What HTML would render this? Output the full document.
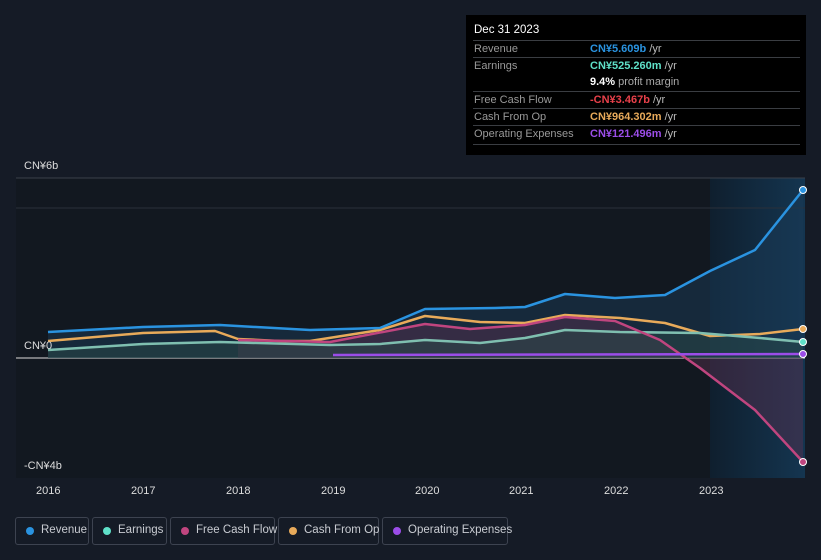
<!DOCTYPE html>
<html><head><meta charset="utf-8"><style>
body{margin:0;width:821px;height:560px;background:#151b26;font-family:"Liberation Sans",sans-serif;overflow:hidden;position:relative}
.tip{position:absolute;left:466px;top:15px;width:340px;height:140px;background:#000;color:#ddd;font-size:11px}
.tip .h{position:absolute;left:8px;top:9px;color:#fff;font-size:11.5px}
.row{position:absolute;left:7px;width:327px;border-top:1px solid #3a3d42;height:17px}
.row .l{position:absolute;left:1px;top:2px;color:#999}
.row .v{position:absolute;left:117px;top:2px;font-weight:bold;white-space:nowrap}
.row .v span{color:#bbb;font-weight:normal}
.leg{position:absolute;top:517px;height:28px;border:1px solid #3d4350;border-radius:3px;color:#c9ccd2;font-size:11.5px;box-sizing:border-box;white-space:nowrap}
.leg i{position:absolute;left:10px;top:9px;width:8px;height:8px;border-radius:50%}
.leg b{position:absolute;left:25px;top:6px;font-weight:normal}
.ax{position:absolute;color:#ddd;font-size:11px}
</style></head><body>
<svg width="821" height="560" style="position:absolute;left:0;top:0">
<rect x="16" y="178" width="694" height="300" fill="#121820"/>
<defs><linearGradient id="g" x1="0" x2="1"><stop offset="0" stop-color="#0f1f2e"/><stop offset="1" stop-color="#143550"/></linearGradient></defs>
<rect x="710" y="178" width="95" height="300" fill="url(#g)"/>
<line x1="16" y1="178" x2="805" y2="178" stroke="#3a404a"/>
<line x1="16" y1="208" x2="805" y2="208" stroke="#2a303a"/>
<line x1="16" y1="358" x2="805" y2="358" stroke="#ddd"/>
<path d="M48,332 L143,327 L220,325 L310,330 L380,328 L425,309 L495,308 L525,307 L565,294 L615,298 L665,295 L710,271 L755,250 L803,190 L803,358 L48,358Z" fill="#1a3a55" opacity="0.5"/>
<path d="M238,340 L330,342 L425,324 L470,329 L525,325 L565,317 L615,321 L660,340 L700,368 L755,410 L803,462 L803,358 L238,358Z" fill="#5a3050" opacity="0.45"/>
<path d="M48,350 L143,344 L220,342 L330,345 L380,344 L425,340 L480,343 L525,338 L565,330 L620,332 L700,333 L760,338 L803,342 L803,358 L48,358Z" fill="#2a4a48" opacity="0.5"/>
<g fill="none" stroke-width="2.5" stroke-linejoin="round">
<path d="M48,341 L143,333 L215,331 L238,339 L280,341 L310,341 L380,330 L425,316 L480,322 L525,323 L565,315 L620,318 L665,323 L710,336 L760,334 L803,329" stroke="#e8aa5a"/>
<path d="M48,350 L143,344 L220,342 L330,345 L380,344 L425,340 L480,343 L525,338 L565,330 L620,332 L700,333 L760,338 L803,342" stroke="#7fbfb0"/>
<path d="M238,340 L330,342 L425,324 L470,329 L525,325 L565,317 L615,321 L660,340 L700,368 L755,410 L803,462" stroke="#c0457f"/>
<path d="M333,355 L803,354" stroke="#9b4de8"/>
<path d="M48,332 L143,327 L220,325 L310,330 L380,328 L425,309 L495,308 L525,307 L565,294 L615,298 L665,295 L710,271 L755,250 L803,190" stroke="#2a93e0"/>
</g>
<g stroke="#fff" stroke-width="1"><circle cx="803" cy="190" r="3.5" fill="#2a93e0"/><circle cx="803" cy="329" r="3.5" fill="#e8aa5a"/><circle cx="803" cy="342" r="3.5" fill="#5fe0c8"/><circle cx="803" cy="354" r="3.5" fill="#9b4de8"/><circle cx="803" cy="462" r="3.5" fill="#c0457f"/></g>
</svg>
<div class="ax" style="left:24px;top:160px">CN¥6b</div>
<div class="ax" style="left:24px;top:340px">CN¥0</div>
<div class="ax" style="left:24px;top:460px">-CN¥4b</div>
<div class="ax" style="left:36px;top:485px">2016</div><div class="ax" style="left:131px;top:485px">2017</div><div class="ax" style="left:226px;top:485px">2018</div><div class="ax" style="left:321px;top:485px">2019</div><div class="ax" style="left:415px;top:485px">2020</div><div class="ax" style="left:509px;top:485px">2021</div><div class="ax" style="left:604px;top:485px">2022</div><div class="ax" style="left:699px;top:485px">2023</div>
<div class="tip"><div class="h">Dec 31 2023</div>
<div class="row" style="top:25px"><div class="l">Revenue</div><div class="v" style="color:#2a93e0">CN¥5.609b <span>/yr</span></div></div>
<div class="row" style="top:42px"><div class="l">Earnings</div><div class="v" style="color:#5fe0c8">CN¥525.260m <span>/yr</span></div></div>
<div class="row" style="top:59px;border-top:none"><div class="v" style="color:#fff">9.4% <span style="color:#aaa">profit margin</span></div></div>
<div class="row" style="top:76px"><div class="l">Free Cash Flow</div><div class="v" style="color:#e8404a">-CN¥3.467b <span>/yr</span></div></div>
<div class="row" style="top:93px"><div class="l">Cash From Op</div><div class="v" style="color:#e8aa5a">CN¥964.302m <span>/yr</span></div></div>
<div class="row" style="top:110px"><div class="l">Operating Expenses</div><div class="v" style="color:#9b4de8">CN¥121.496m <span>/yr</span></div></div>
<div class="row" style="top:129px;height:0"></div>
</div>
<div class="leg" style="left:15px;width:74px"><i style="background:#2a93e0"></i><b>Revenue</b></div>
<div class="leg" style="left:92px;width:75px"><i style="background:#5fe0c8"></i><b>Earnings</b></div>
<div class="leg" style="left:170px;width:105px"><i style="background:#c0457f"></i><b>Free Cash Flow</b></div>
<div class="leg" style="left:278px;width:101px"><i style="background:#e8aa5a"></i><b>Cash From Op</b></div>
<div class="leg" style="left:382px;width:126px"><i style="background:#9b4de8"></i><b>Operating Expenses</b></div>
</body></html>
